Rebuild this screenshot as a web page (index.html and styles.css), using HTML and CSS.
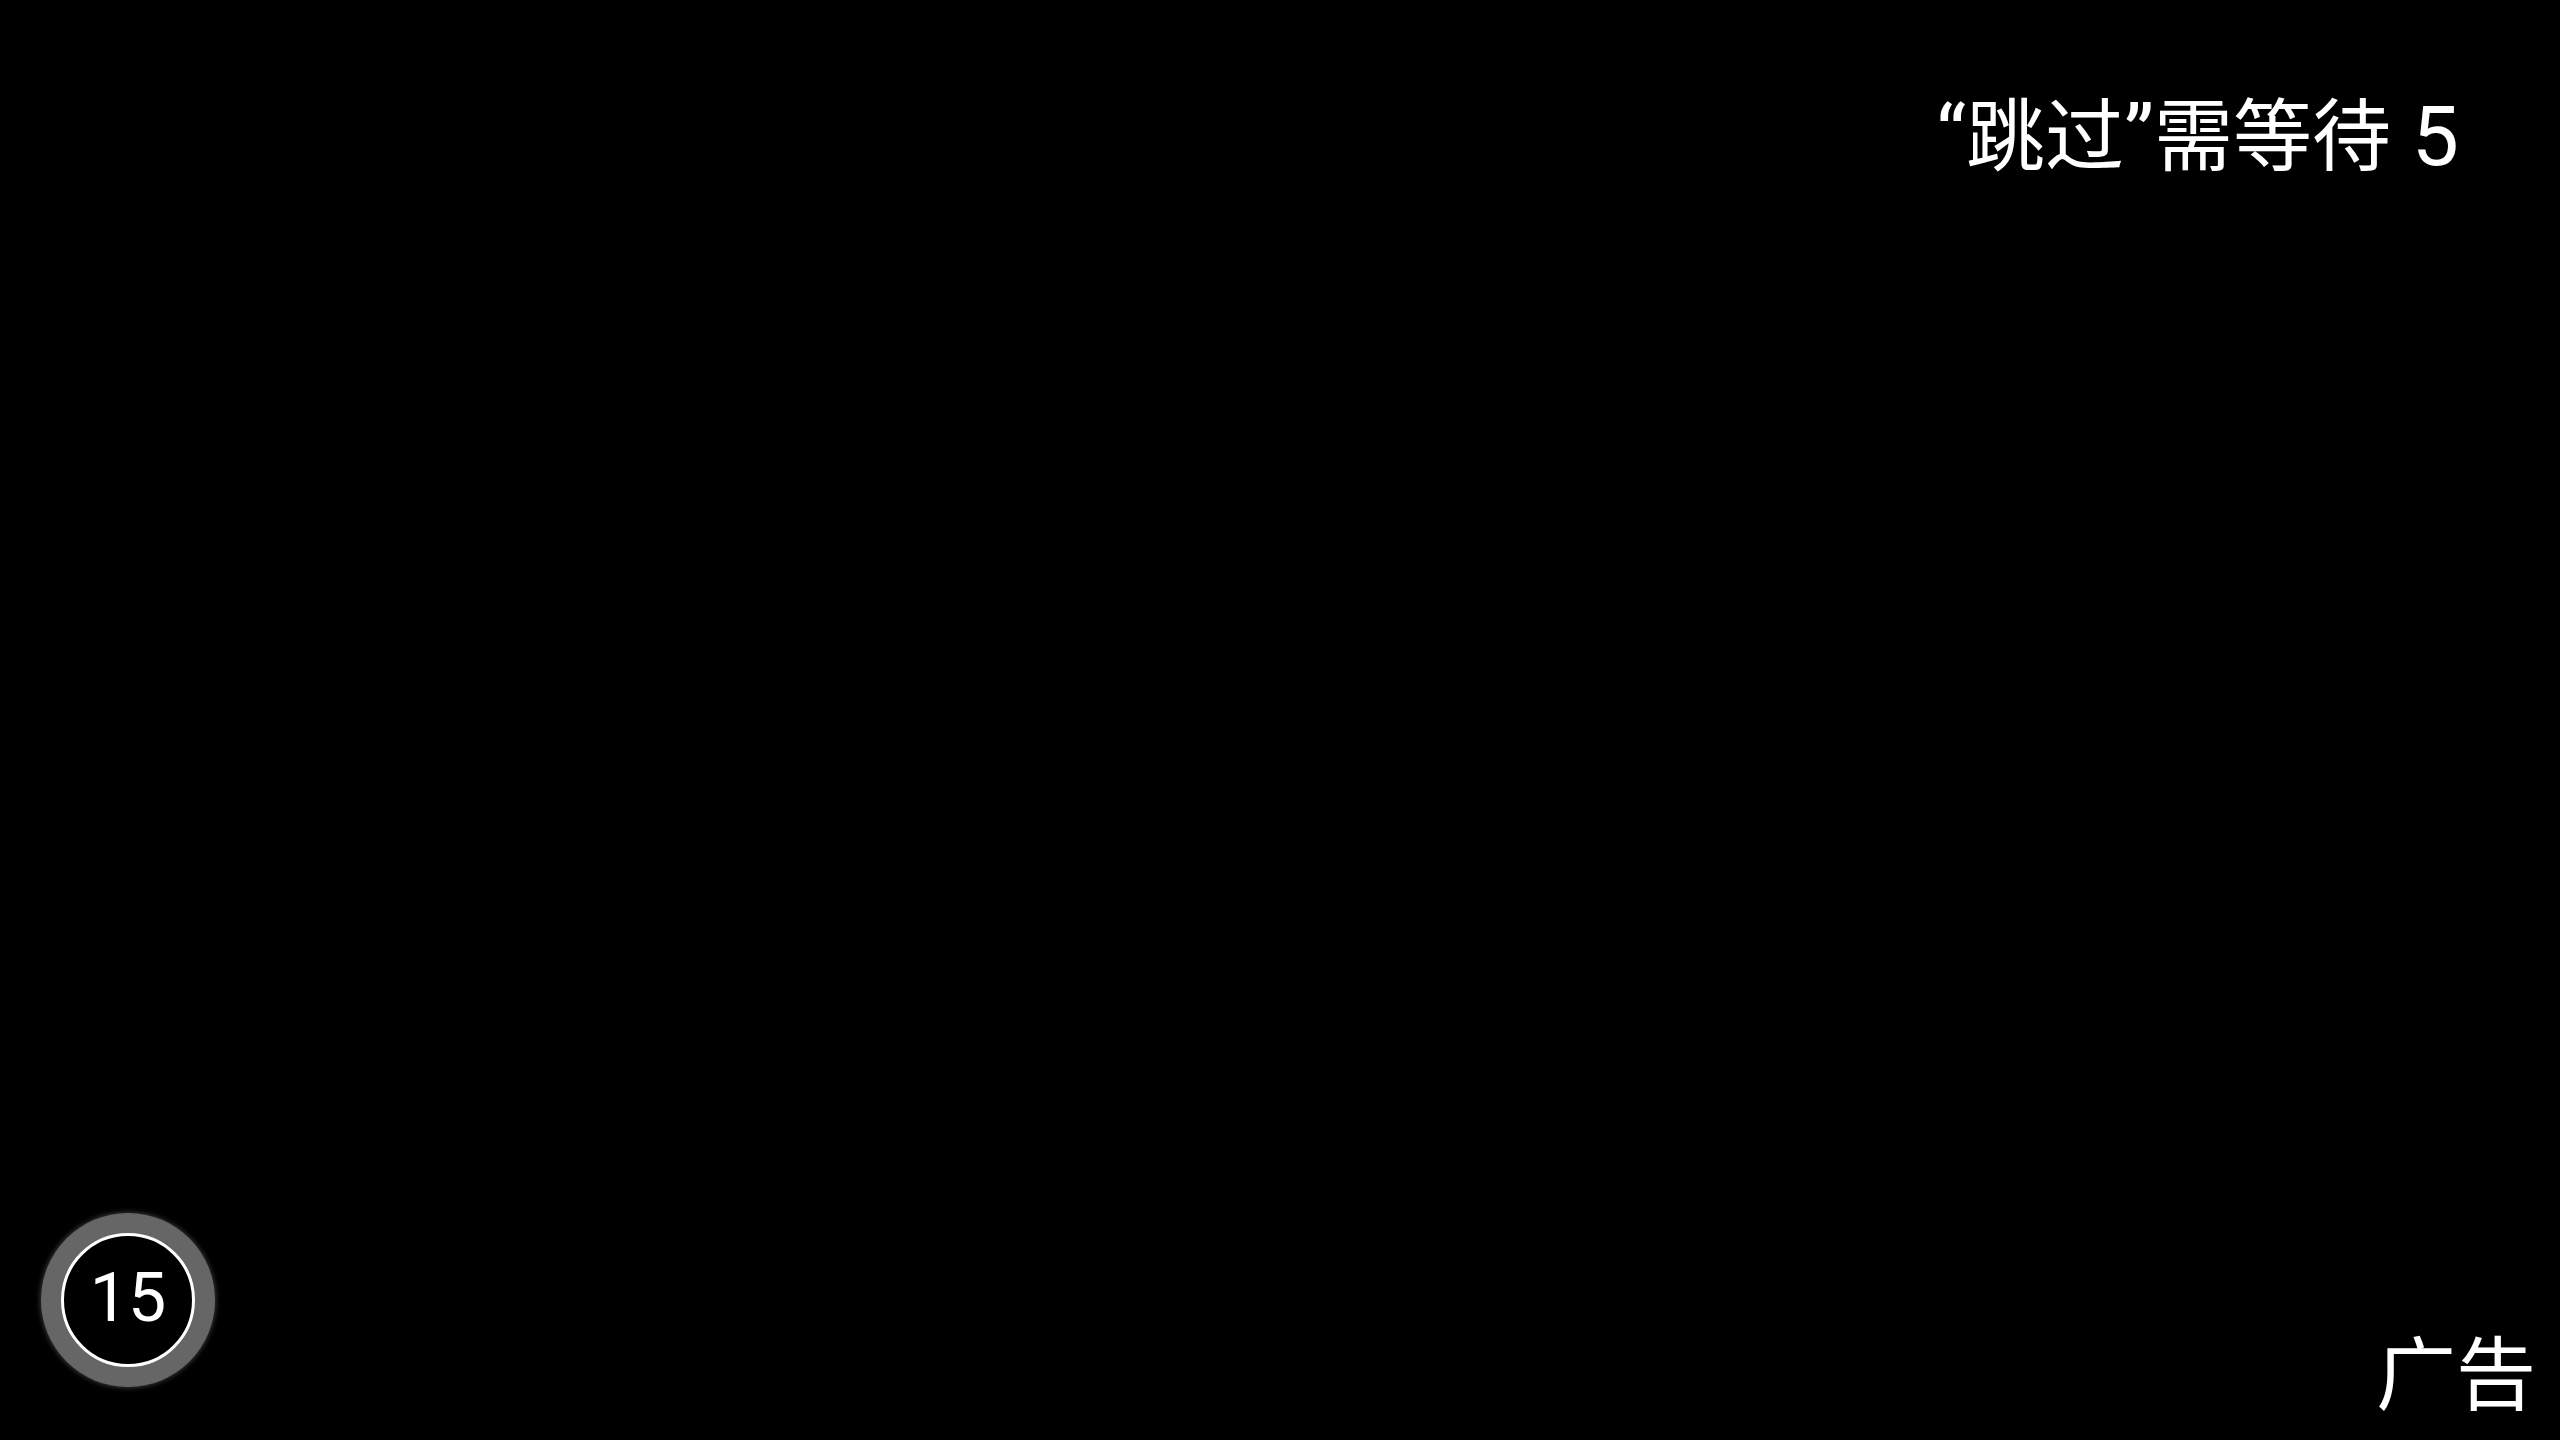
FILE: index.html
```html
<!DOCTYPE html>
<html lang="zh-CN">
<head>
<meta charset="utf-8">
<title>广告</title>
<link rel="stylesheet" href="styles.css">
</head>
<body>
<div class="screen">
  <div class="top-bar">
    <div class="skip-hint"><span class="latin">“</span>跳过<span class="latin">”</span>需等待<span class="latin"> 5</span></div>
  </div>
  <div class="bottom-bar">
    <div class="timer">
      <div class="timer-inner"><span class="timer-count">15</span></div>
    </div>
    <div class="ad-label">广告</div>
  </div>
</div>
</body>
</html>
```
FILE: styles.css
```css
html, body {
  margin: 0;
  padding: 0;
  background: #000;
}
body {
  width: 2560px;
  height: 1440px;
  overflow: hidden;
  font-family: Roboto, "Noto Sans CJK SC", sans-serif;
  color: #fff;
}
.screen {
  width: 2560px;
  height: 1440px;
  box-sizing: border-box;
  display: flex;
  flex-direction: column;
  justify-content: space-between;
}
.top-bar {
  display: flex;
  justify-content: flex-end;
  padding: 81px 101px 0 0;
}
.skip-hint {
  font-family: "Noto Sans CJK SC", sans-serif;
  font-size: 79px;
  line-height: 100px;
  white-space: nowrap;
}
.skip-hint .latin {
  font-family: Roboto, sans-serif;
  font-size: 84px;
}
.bottom-bar {
  display: flex;
  justify-content: space-between;
  align-items: flex-end;
  padding: 0 24px 0 41px;
}
.timer {
  width: 174px;
  height: 174px;
  border-radius: 50%;
  background: #666;
  box-shadow: 0 0 5px 1px rgba(102, 102, 102, 0.55);
  display: flex;
  align-items: center;
  justify-content: center;
  margin-bottom: 53px;
}
.timer-inner {
  width: 128px;
  height: 128px;
  box-sizing: content-box;
  border: 3.5px solid #fff;
  border-radius: 50%;
  background: #000;
  display: flex;
  align-items: center;
  justify-content: center;
}
.timer-count {
  font-family: Roboto, sans-serif;
  font-size: 68px;
  line-height: 1;
  padding-bottom: 5px;
}
.ad-label {
  font-family: "Noto Sans CJK SC", sans-serif;
  font-size: 80px;
  line-height: 100px;
  margin-bottom: 22px;
}
```
